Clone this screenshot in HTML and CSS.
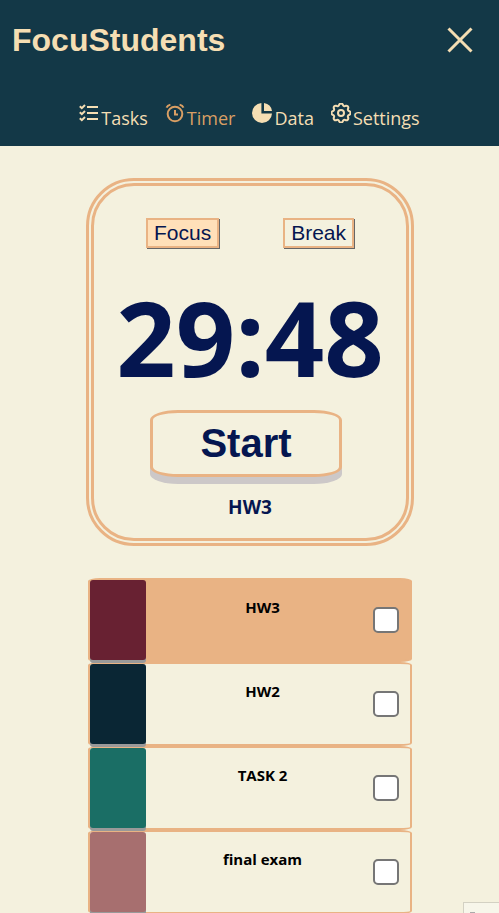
FILE: index.html
```html
<!DOCTYPE html>
<html lang="en">
<head>
<meta charset="utf-8">
<meta name="viewport" content="width=device-width, initial-scale=1">
<title>FocuStudents</title>
<link rel="stylesheet" href="styles.css">
</head>
<body>
<header class="header">
  <div class="brand-row">
    <h1 class="brand">FocuStudents</h1>
    <button class="close" type="button" aria-label="Close menu">
      <svg viewBox="0 0 26 26" width="26" height="26" fill="none" stroke="currentColor" stroke-width="3"><path d="M1.500 1.500 24.500 24.500M24.500 1.500 1.500 24.500"/></svg>
    </button>
  </div>
  <nav class="nav">
    <a class="nav-link" href="#tasks">
      <svg viewBox="0 0 20 20" width="20" height="20" fill="none" stroke="currentColor" stroke-width="2"><path d="M8 4h11M8 10h11M8 16h11"/><path d="M.8 3.300 2.800 5.200 6 2M.8 9.300 2.800 11.200 6 8M.8 15.300 2.800 17.200 6 14"/></svg>
      <span>Tasks</span>
    </a>
    <a class="nav-link active" href="#timer">
      <svg viewBox="0 0 20 20" width="20" height="20" fill="none" stroke="currentColor" stroke-width="2"><circle cx="10" cy="11" r="7.300"/><path d="M1.500 4.600Q2.500 2.400 5.400 1.600M18.500 4.600Q17.500 2.400 14.600 1.600M10 7v4.500h3"/></svg>
      <span>Timer</span>
    </a>
    <a class="nav-link" href="#data">
      <svg viewBox="0 0 20 20" width="20" height="20" fill="currentColor"><path d="M9.400 0A10 10 0 1 0 20 10.400H9.400ZM12 0V8H20A9.500 9.500 0 0 0 12 0Z"/></svg>
      <span>Data</span>
    </a>
    <a class="nav-link" href="#settings">
      <svg viewBox="0 0 20 20" width="20" height="20" fill="none" stroke="currentColor" stroke-width="2" stroke-linejoin="round"><path d="M18.410 8.210A2 2 0 0 1 18.410 11.790Q16.100 12.530 17.210 14.680A2 2 0 0 1 14.680 17.210Q12.530 16.100 11.790 18.410A2 2 0 0 1 8.210 18.410Q7.470 16.100 5.320 17.210A2 2 0 0 1 2.790 14.680Q3.900 12.530 1.590 11.790A2 2 0 0 1 1.590 8.210Q3.900 7.470 2.790 5.320A2 2 0 0 1 5.320 2.790Q7.470 3.900 8.210 1.590A2 2 0 0 1 11.790 1.590Q12.530 3.900 14.680 2.790A2 2 0 0 1 17.210 5.320Q16.100 7.470 18.410 8.210Z"/><circle cx="10" cy="10" r="3"/></svg>
      <span>Settings</span>
    </a>
  </nav>
</header>
<main class="main">
  <section class="timer">
    <div class="modes">
      <button class="mode selected" type="button">Focus</button>
      <button class="mode" type="button">Break</button>
    </div>
    <div class="clock">29:48</div>
    <button class="start" type="button">Start</button>
    <p class="current">HW3</p>
  </section>
  <ul class="tasks">
    <li class="task chosen"><span class="swatch plum"></span><label class="task-name" for="task1">HW3</label><input class="done" type="checkbox" id="task1"></li>
    <li class="task"><span class="swatch navy"></span><label class="task-name" for="task2">HW2</label><input class="done" type="checkbox" id="task2"></li>
    <li class="task"><span class="swatch teal"></span><label class="task-name" for="task3">TASK 2</label><input class="done" type="checkbox" id="task3"></li>
    <li class="task"><span class="swatch rose"></span><label class="task-name" for="task4">final exam</label><input class="done" type="checkbox" id="task4"></li>
  </ul>
</main>
<div class="corner-panel"><span class="corner-mark"></span></div>
</body>
</html>
```
FILE: styles.css
```css
* {
  box-sizing: border-box;
}

body {
  margin: 0;
  height: 100vh;
  display: flex;
  flex-direction: column;
  background: #f4f1de;
  color: #000;
  font-family: "Open Sans", "Noto Sans", sans-serif;
}

button {
  font-family: "Liberation Sans", Arial, sans-serif;
  color: #051650;
}

.header {
  flex: none;
  background: #133847;
  color: #f5deb3;
  padding-bottom: 13px;
}

.brand-row {
  display: flex;
  align-items: center;
  justify-content: space-between;
  height: 80px;
  padding: 0 26px 0 12px;
}

.brand {
  margin: 0;
  font: bold 32px "Liberation Sans", Arial, sans-serif;
}

.close {
  display: flex;
  padding: 0;
  border: 0;
  background: none;
  color: inherit;
}

.nav {
  display: flex;
  justify-content: center;
  gap: 17px;
  padding-top: 23px;
}

.nav-link {
  display: flex;
  align-items: flex-start;
  gap: 2px;
  color: inherit;
  font-size: 18px;
  line-height: 30px;
  text-decoration: none;
}

.active {
  color: #d99f64;
}

.main {
  flex: 1;
  min-height: 0;
  overflow-y: auto;
  scrollbar-width: none;
  padding: 32px 0 0 1px;
}

.timer {
  width: 66%;
  margin: 0 auto 32px;
  padding: 32px 16px 19px;
  border: 8px double #e9b384;
  border-radius: 48px;
  display: flex;
  flex-direction: column;
  align-items: center;
}

.modes {
  display: flex;
  gap: 64px;
}

.mode {
  height: 30px;
  padding: 0 6px;
  border: 2px solid #e9b384;
  background: transparent;
  box-shadow: 1px 1px #666;
  font-size: 21px;
}

.selected {
  background: #ffe0b9;
}

.clock {
  color: #051650;
  font-size: 104px;
  font-weight: bold;
  line-height: 130px;
  margin: 24px 0 8px;
}

.start {
  width: 192px;
  max-width: 100%;
  height: 67px;
  margin-right: 8px;
  padding: 0;
  border: 3px solid #e9b384;
  border-radius: 28px / 10px;
  background: #f4f1de;
  box-shadow: 0 7px #ccc8c8;
  font-size: 40px;
  font-weight: bold;
}

.current {
  margin: 18px 0 0;
  color: #051650;
  font-size: 19px;
  font-weight: bold;
  line-height: 24px;
}

.tasks {
  width: 65%;
  margin: 0 auto;
  padding: 0;
  list-style: none;
}

.task {
  display: flex;
  height: 84px;
  padding-right: 11px;
  border: 2px solid #e9b384;
  border-radius: 12px / 3px;
}

.chosen {
  background: #e9b384;
}

.swatch {
  flex: none;
  width: 56px;
  border-radius: 3px;
  box-shadow: 0 3px #999;
}

.plum { background: #682132; }
.navy { background: #0a2634; }
.teal { background: #1a6e65; }
.rose { background: #a76f6f; }

.task-name {
  flex: 1;
  padding: 17px 0 0 6px;
  font-size: 15px;
  font-weight: bold;
  line-height: 20px;
  text-align: center;
}

.done {
  appearance: none;
  flex: none;
  width: 26px;
  height: 26px;
  margin: 27px 0 0;
  border: 2px solid #767676;
  border-radius: 5px;
  background: #fff;
}

.corner-panel {
  position: fixed;
  right: 0;
  bottom: 0;
  width: 36px;
  height: 11px;
  border: solid #d3d1c3;
  border-width: 1px 0 0 1px;
  background: #f7f6ea;
  display: flex;
  align-items: flex-end;
  padding-left: 6px;
}

.corner-mark {
  width: 5px;
  height: 1px;
  background: #aaa;
}
```
